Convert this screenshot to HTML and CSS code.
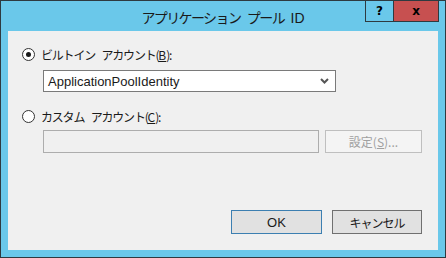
FILE: index.html
```html
<!DOCTYPE html>
<html lang="ja">
<head>
    <meta charset="UTF-8">
    <title>アプリケーション プール ID</title>
    <link rel="stylesheet" href="styles.css">
</head>
<body>
    <div class="window">
        <div class="titlebar">
            <span class="title">アプリケーション プール <span class="latin">ID</span></span>
            <div class="caption-buttons">
                <div class="cap help">?</div>
                <div class="cap close">x</div>
            </div>
        </div>
        <div class="content">
            <div class="option">
                <span class="radio checked"></span>
                <span class="label">ビルトイン アカウント(<u>B</u>):</span>
            </div>
            <div class="select">
                <span>ApplicationPoolIdentity</span>
                <svg width="9" height="6" viewBox="0 0 9 6"><path d="M1 1 L4.5 4.5 L8 1" fill="none" stroke="#555" stroke-width="2"/></svg>
            </div>
            <div class="option second">
                <span class="radio"></span>
                <span class="label">カスタム アカウント(<u>C</u>):</span>
            </div>
            <div class="custom-row">
                <div class="textbox"></div>
                <div class="btn disabled">設定(<u>S</u>)...</div>
            </div>
            <div class="footer">
                <div class="btn default">OK</div>
                <div class="btn">キャンセル</div>
            </div>
        </div>
    </div>
</body>
</html>
```

FILE: styles.css
```css
body {
    margin: 0;
    background: #2b2b2b;
    font-family: "Noto Sans CJK JP", "Noto Sans", sans-serif;
}

.window {
    position: relative;
    width: 444px;
    height: 256px;
    border: 1px solid #2e3a40;
    background: #6ac8ea;
    display: flex;
    flex-direction: column;
}

.titlebar {
    height: 30px;
    display: flex;
    justify-content: center;
    align-items: center;
}

.title {
    font-size: 14px;
    letter-spacing: -1.6px;
    word-spacing: 5px;
    color: #1a1a1a;
    margin-top: 2px;
}

.title .latin {
    letter-spacing: 0;
    font-family: "Liberation Sans", sans-serif;
    font-size: 14px;
}

.caption-buttons {
    position: absolute;
    top: -1px;
    right: 6px;
    display: flex;
}

.cap {
    height: 20px;
    border: 1px solid #2e3a40;
    display: flex;
    justify-content: center;
    align-items: center;
    font-family: "DejaVu Sans", sans-serif;
    font-weight: bold;
    font-size: 12px;
    color: #000;
}

.help {
    width: 27px;
    border-right: none;
}

.close {
    width: 44px;
    background: #c75050;
}

.content {
    flex: 1;
    margin: 0 7px 7px 7px;
    background: #f0f0f0;
    padding: 17px 16px 0 14px;
    display: flex;
    flex-direction: column;
    font-size: 12px;
    color: #1a1a1a;
}

.option {
    display: flex;
    align-items: center;
    height: 13px;
}

.option.second {
    margin-top: 18px;
}

.radio {
    width: 11px;
    height: 11px;
    border: 1px solid #333;
    border-radius: 50%;
    background: #fff;
    display: flex;
    justify-content: center;
    align-items: center;
    margin-right: 6px;
}

.radio.checked::after {
    content: "";
    width: 5px;
    height: 5px;
    border-radius: 50%;
    background: #1a1a1a;
}

.label {
    letter-spacing: -1.2px;
    word-spacing: 5px;
}

.label u {
    letter-spacing: 0;
}

.select {
    margin: 9px 0 0 21px;
    width: 281px;
    height: 20px;
    border: 1px solid #7a7a7a;
    background: #fff;
    display: flex;
    align-items: center;
    justify-content: space-between;
    padding: 0 6px 0 4px;
    font-family: "Liberation Sans", sans-serif;
    font-size: 13px;
}

.custom-row {
    margin: 7px 0 0 21px;
    display: flex;
    gap: 6px;
}

.textbox {
    width: 274px;
    height: 21px;
    border: 1px solid #adadad;
    background: #f0f0f0;
}

.btn {
    height: 22px;
    border: 1px solid #707070;
    background: #e1e1e1;
    display: flex;
    justify-content: center;
    align-items: center;
    font-size: 12px;
    letter-spacing: -1px;
}

.btn.disabled {
    width: 95px;
    height: 21px;
    border-color: #bfbfbf;
    background: #f4f4f4;
    color: #a0a0a0;
    letter-spacing: 0;
}

.footer {
    margin-top: 57px;
    display: flex;
    justify-content: flex-end;
    gap: 10px;
}

.footer .btn {
    width: 88px;
}

.btn.default {
    width: 89px;
    border-color: #3c7fb1;
    font-family: "Liberation Sans", sans-serif;
    font-size: 13px;
    letter-spacing: 0;
}
```
